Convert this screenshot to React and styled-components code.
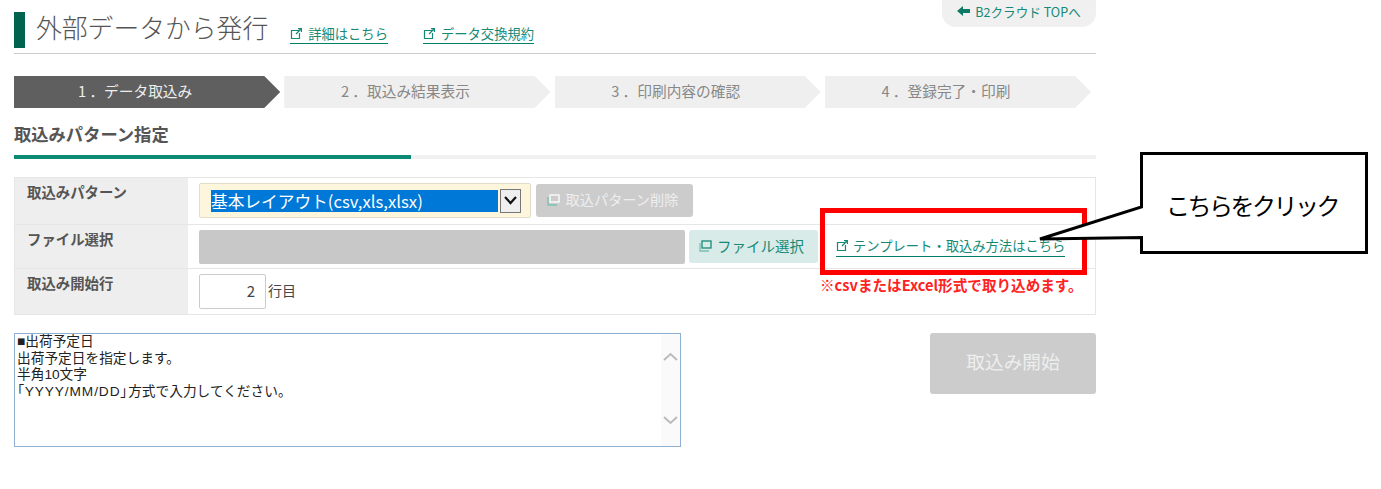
import React from 'react';
import styled, { createGlobalStyle } from 'styled-components';

const Global = createGlobalStyle`
  html, body { margin: 0; padding: 0; background: #fff; }
  body { font-family: "Noto Sans CJK JP", "Liberation Sans", sans-serif; color: #333; }
  * { box-sizing: border-box; }
  a { text-decoration: none; }
`;
const Page = styled.div`position: relative; width: 1381px; height: 489px; padding-left: 14px; overflow: hidden;`;
const Content = styled.div`width: 1082px;`;
const Header = styled.header`display: flex; align-items: flex-start; height: 54px; border-bottom: 1px solid #ccc;`;
const TitleBlock = styled.h1`
  margin: 12px 0 0; height: 36px; border-left: 11px solid #00634f; padding-left: 11px;
  font-size: 25.8px; line-height: 29px; font-weight: 300; color: #555; white-space: nowrap;
`;
const HeadLink = styled.a`
  display: inline-flex; align-items: center; gap: 5px; height: 19px; margin: 25px 0 0 ${p => p.$gap}px;
  border-bottom: 1px solid #00806b; color: #168a76; font-size: 13.3px; line-height: 15px; padding-bottom: 2px; white-space: nowrap;
`;
const TopButton = styled.a`
  margin-left: auto; width: 154px; height: 27px; border-radius: 0 0 14px 14px / 0 0 14px 14px;
  background: #f0f0f0; color: #168a76; font-size: 12.6px; display: flex; align-items: center; justify-content: center; gap: 5px;
  padding-bottom: 5px; white-space: nowrap;
`;
const Steps = styled.ol`display: flex; gap: 4px; list-style: none; margin: 22px 0 0; padding: 0; width: 1077px;`;
const Step = styled.li`
  flex: 1; height: 32px; display: flex; align-items: center; justify-content: center;
  font-size: 14.7px; padding: 0 24px 3px 0; white-space: pre;
  background: ${p => (p.$active ? '#5f5f5f' : '#efefef')};
  color: ${p => (p.$active ? '#eee' : '#888')};
  clip-path: polygon(0 0, calc(100% - 16px) 0, 100% 50%, calc(100% - 16px) 100%, 0 100%);
`;
const SectionTitle = styled.h2`margin: 14px 0 0; font-size: 17.3px; line-height: 24px; font-weight: 700; color: #555;`;
const SectionRule = styled.div`
  height: 4px; margin-top: 9px; background: linear-gradient(to right, #0c8a76 397px, #f1f1f1 397px);
`;
const Table = styled.div`margin-top: 18px; border: 1px solid #e6e6e6;`;
const Row = styled.div`
  display: grid; grid-template-columns: 173px 1fr; height: ${p => p.$h}px;
  & + & { border-top: 1px solid #e6e6e6; }
`;
const Label = styled.div`background: #eee; padding: 4px 0 0 12px; font-size: 14.4px; font-weight: 700; line-height: 20px; color: #555;`;
const Cell = styled.div`display: flex; align-items: flex-start; padding: 5px 0 0 11px;`;
const SelectBox = styled.div`
  width: 332px; height: 35px; background: #fdf6dc; border: 1px solid #e2dccb; border-radius: 2px;
  padding: 0 9px 0 11px; display: flex; align-items: center; gap: 2px;
`;
const SelectValue = styled.div`
  flex: 1; height: 22px; background: #0078d7; color: #fff; font-size: 16.7px; line-height: 22px; white-space: nowrap; overflow: hidden;
`;
const SelectArrow = styled.div`
  width: 21px; height: 24px; background: #efefef; border: 1px solid #777; display: flex; align-items: center; justify-content: center;
`;
const ActionButton = styled.button`
  height: ${p => p.$h}px; width: ${p => p.$w}px; margin-left: ${p => p.$ml}px; margin-top: ${p => p.$mt || 0}px;
  border: 0; border-radius: 3px; padding: 0 ${p => p.$pr || 0}px 3px 0; display: flex; align-items: center; justify-content: center; gap: ${p => p.$gap}px;
  background: ${p => (p.$teal ? '#d9ebe8' : '#ccc')};
  color: ${p => (p.$teal ? '#168a76' : '#eee')};
  font-family: inherit; font-size: ${p => p.$fs}px; white-space: nowrap;
`;
const FileField = styled.div`width: 486px; height: 34px; background: #c8c8c8; border-radius: 2px;`;
const TemplateLink = styled.a`
  display: inline-flex; align-items: center; gap: 4px; height: 20px; margin: 7px 0 0 18px;
  border-bottom: 1px solid #00806b; color: #168a76; font-size: 13.3px; line-height: 16px; padding-bottom: 2px; white-space: nowrap;
`;
const NumberField = styled.div`
  width: 67px; height: 35px; background: #fff; border: 1px solid #ccc; border-radius: 2px;
  font-size: 15px; line-height: 31px; text-align: right; padding-right: 10px; color: #444;
`;
const Unit = styled.span`margin: 6px 0 0 2px; font-size: 14px; line-height: 20px; color: #444;`;
const Bottom = styled.div`display: flex; justify-content: space-between; align-items: flex-start; margin-top: 18px;`;
const Notes = styled.div`
  width: 667px; height: 114px; border: 1px solid #8fb0d0; padding: 0 0 0 2px; display: flex;
  font-family: "Liberation Sans", "Noto Sans CJK JP", sans-serif; font-size: 13.7px; line-height: 16.7px; color: #222;
`;
const NotesText = styled.div`flex: 1; white-space: pre;`;
const Tight = styled.span`font-feature-settings: "palt"; letter-spacing: 0.9px;`;
const Scroll = styled.div`
  width: 19px; background: #fafafa; display: flex; flex-direction: column; align-items: center; justify-content: space-between; padding: 18px 0 21px;
`;
const StartButton = styled.button`
  width: 166px; height: 61px; border: 0; border-radius: 3px; background: #ccc; color: #eee;
  font-family: inherit; font-size: 18.7px; padding: 0 0 6px;
`;
const RedFrame = styled.div`position: absolute; left: 820px; top: 208px; width: 267px; height: 67px; border: 5px solid #f00;`;
const Notice = styled.div`
  position: absolute; left: 820px; top: 275px; font-size: 14.6px; line-height: 20px; font-weight: 700; color: #f22; white-space: nowrap;
`;
const Callout = styled.svg`position: absolute; left: 1030px; top: 145px;`;
const CalloutText = styled.div`
  position: absolute; left: 1141px; top: 156px; width: 222px; height: 96px; display: flex; align-items: center; justify-content: center;
  font-size: 24px; color: #000; letter-spacing: -2.5px; font-weight: 400; white-space: nowrap;
`;

const ExtIcon = () => (
  <svg width="13" height="13" viewBox="0 0 13 13" fill="none" stroke="#168a76" strokeWidth="1.2">
    <path d="M9 3.5H1.5v8h8V6" />
    <path d="M6 7l5-5M8 1.6h3.4V5" />
  </svg>
);
const WinIcon = ({ color = '#fff' }) => (
  <svg width="13" height="13" viewBox="0 0 13 13" fill="none" strokeWidth="1.3">
    <path d="M1 4v8h9" stroke="#7cc0b2" />
    <rect x="3" y="2" width="9" height="7" stroke={color} />
  </svg>
);

export default function App() {
  return (
    <Page>
      <Global />
      <Content>
        <Header>
          <TitleBlock>外部データから発行</TitleBlock>
          <HeadLink href="#" $gap={22}><ExtIcon />詳細はこちら</HeadLink>
          <HeadLink href="#" $gap={35}><ExtIcon />データ交換規約</HeadLink>
          <TopButton href="#">
            <svg width="13" height="10" viewBox="0 0 13 10" fill="#0c7a66"><path d="M0 5l6-5v3h7v4H6v3z" /></svg>
            B2クラウド TOPへ
          </TopButton>
        </Header>
        <Steps>
          <Step $active>{'1 ．データ取込み'}</Step>
          <Step>{'2 ．取込み結果表示'}</Step>
          <Step>{'3 ．印刷内容の確認'}</Step>
          <Step>{'4 ．登録完了・印刷'}</Step>
        </Steps>
        <SectionTitle>取込みパターン指定</SectionTitle>
        <SectionRule />
        <Table>
          <Row $h={46}>
            <Label>取込みパターン</Label>
            <Cell>
              <SelectBox>
                <SelectValue>基本レイアウト(csv,xls,xlsx)</SelectValue>
                <SelectArrow>
                  <svg width="13" height="9" viewBox="0 0 13 9" fill="none" stroke="#111" strokeWidth="2.2"><path d="M1 1l5.500 6L12 1" /></svg>
                </SelectArrow>
              </SelectBox>
              <ActionButton $w={157} $h={33} $ml={5} $mt={1} $fs={14.2} $gap={6} $pr={4}><WinIcon />取込パターン削除</ActionButton>
            </Cell>
          </Row>
          <Row $h={44}>
            <Label>ファイル選択</Label>
            <Cell>
              <FileField />
              <ActionButton $teal $w={129} $h={33} $ml={4} $fs={14.5} $gap={5} $pr={4}><WinIcon color="#168a76" />ファイル選択</ActionButton>
              <TemplateLink href="#"><ExtIcon />テンプレート・取込み方法はこちら</TemplateLink>
            </Cell>
          </Row>
          <Row $h={46}>
            <Label>取込み開始行</Label>
            <Cell>
              <NumberField>2</NumberField>
              <Unit>行目</Unit>
            </Cell>
          </Row>
        </Table>
        <Bottom>
          <Notes>
            <NotesText>
              {'■出荷予定日\n出荷予定日を指定します。\n半角10文字\n'}
              <Tight>「YYYY/MM/DD」</Tight>
              方式で入力してください。
            </NotesText>
            <Scroll>
              <svg width="15" height="9" viewBox="0 0 15 9" fill="none" stroke="#bbb" strokeWidth="2"><path d="M1 8l6.500-6L14 8" /></svg>
              <svg width="15" height="9" viewBox="0 0 15 9" fill="none" stroke="#bbb" strokeWidth="2"><path d="M1 1l6.500 6L14 1" /></svg>
            </Scroll>
          </Notes>
          <StartButton>取込み開始</StartButton>
        </Bottom>
      </Content>
      <RedFrame />
      <Notice>※csvまたはExcel形式で取り込めます。</Notice>
      <Callout width="345" height="115" viewBox="0 0 345 115">
        <path d="M111.500 8.500H336.500V107.500H111.500V92.500L10 94L111.500 62Z" fill="#fff" stroke="#000" strokeWidth="3" />
      </Callout>
      <CalloutText>こちらをクリック</CalloutText>
    </Page>
  );
}
